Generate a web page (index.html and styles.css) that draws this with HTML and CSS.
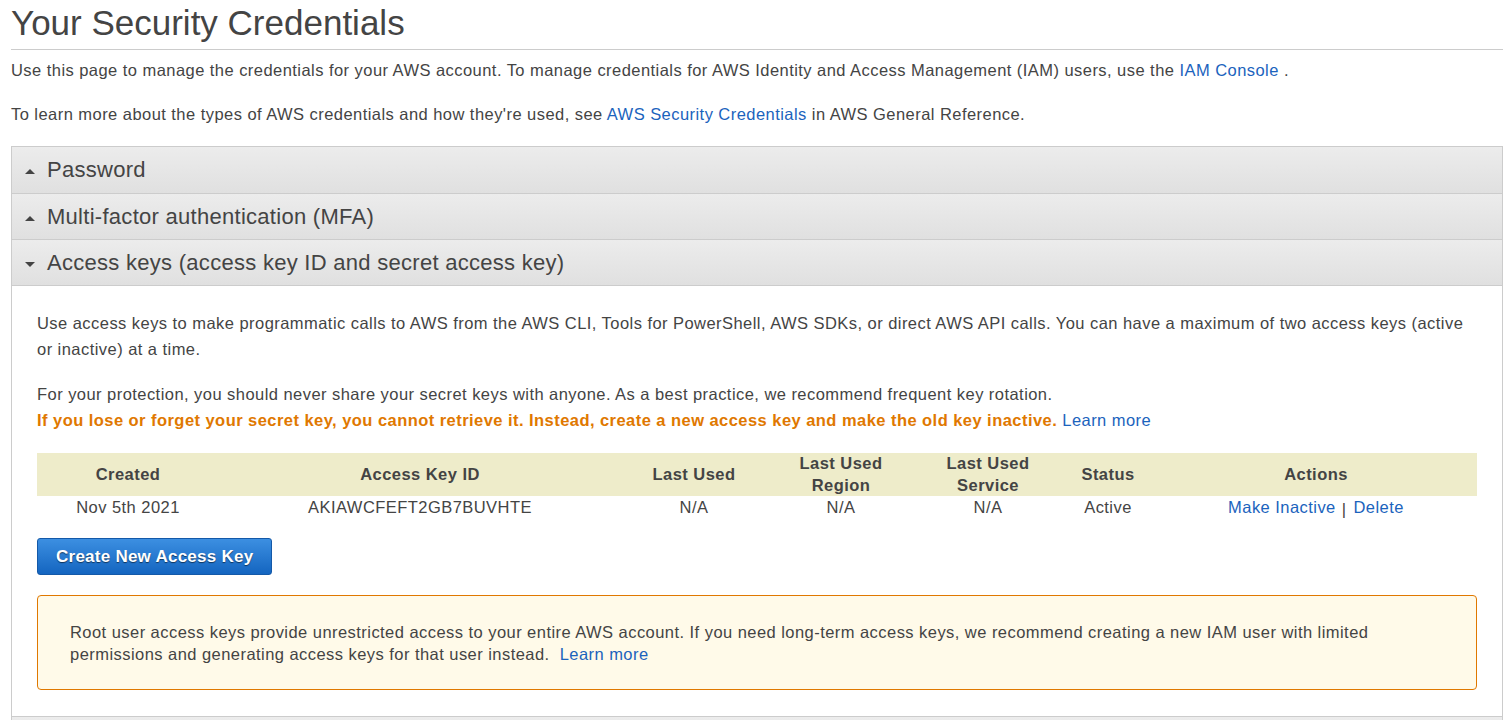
FILE: index.html
```html
<!DOCTYPE html>
<html lang="en">
<head>
<meta charset="utf-8">
<title>Your Security Credentials</title>
<link rel="stylesheet" href="styles.css">
</head>
<body>
<div class="page">
  <h1 class="title">Your Security Credentials</h1>
  <p class="intro">Use this page to manage the credentials for your AWS account. To manage credentials for AWS Identity and Access Management (IAM) users, use the <a class="link" href="#">IAM Console</a> .</p>
  <p class="intro intro-second">To learn more about the types of AWS credentials and how they're used, see <a class="link" href="#">AWS Security Credentials</a> in AWS General Reference.</p>

  <div class="accordion">
    <div class="acc-header acc-first"><span class="caret caret-up"></span><span class="acc-title">Password</span></div>
    <div class="acc-header"><span class="caret caret-up"></span><span class="acc-title">Multi-factor authentication (MFA)</span></div>
    <div class="acc-header"><span class="caret caret-down"></span><span class="acc-title">Access keys (access key ID and secret access key)</span></div>
    <div class="acc-body">
      <p class="body-text">Use access keys to make programmatic calls to AWS from the AWS CLI, Tools for PowerShell, AWS SDKs, or direct AWS API calls. You can have a maximum of two access keys (active<br>or inactive) at a time.</p>
      <p class="body-text body-second">For your protection, you should never share your secret keys with anyone. As a best practice, we recommend frequent key rotation.<br><strong class="warn-text">If you lose or forget your secret key, you cannot retrieve it. Instead, create a new access key and make the old key inactive.</strong> <a class="link" href="#">Learn more</a></p>

      <table class="keys">
        <colgroup>
          <col class="c-created"><col class="c-id"><col class="c-used"><col class="c-region"><col class="c-service"><col class="c-status"><col class="c-actions">
        </colgroup>
        <thead>
          <tr>
            <th>Created</th>
            <th>Access Key ID</th>
            <th>Last Used</th>
            <th>Last Used<br>Region</th>
            <th>Last Used<br>Service</th>
            <th>Status</th>
            <th>Actions</th>
          </tr>
        </thead>
        <tbody>
          <tr>
            <td>Nov 5th 2021</td>
            <td>AKIAWCFEFT2GB7BUVHTE</td>
            <td>N/A</td>
            <td>N/A</td>
            <td>N/A</td>
            <td>Active</td>
            <td><a class="link" href="#">Make Inactive</a><span class="sep">|</span><a class="link" href="#">Delete</a></td>
          </tr>
        </tbody>
      </table>

      <button class="btn-primary" type="button">Create New Access Key</button>

      <div class="notice">Root user access keys provide unrestricted access to your entire AWS account. If you need long-term access keys, we recommend creating a new IAM user with limited<br>permissions and generating access keys for that user instead.&nbsp; <a class="link" href="#">Learn more</a></div>
    </div>
    <div class="acc-header"><span class="caret caret-up"></span><span class="acc-title">CloudFront key pairs</span></div>
    <div class="acc-header"><span class="caret caret-up"></span><span class="acc-title">X.509 certificate</span></div>
    <div class="acc-header"><span class="caret caret-up"></span><span class="acc-title">Account identifiers</span></div>
  </div>
</div>
</body>
</html>
```

FILE: styles.css
```css
html, body {
  margin: 0;
  padding: 0;
  background: #ffffff;
}

body {
  font-family: "Liberation Sans", Arial, sans-serif;
  color: #444444;
  font-size: 16.5px;
  letter-spacing: 0.45px;
}

.page {
  padding: 0 7px 0 11px;
}

.title {
  margin: 0;
  padding: 3px 0 6px 0;
  font-size: 35px;
  font-weight: normal;
  letter-spacing: 0;
  line-height: 40px;
  color: #444444;
  border-bottom: 1px solid #cccccc;
}

.intro {
  margin: 9px 0 0 0;
  line-height: 22px;
}

.intro-second {
  margin-top: 22px;
}

.link {
  color: #1b63bd;
  text-decoration: none;
}

.accordion {
  margin-top: 21px;
  border: 1px solid #cccccc;
  border-bottom: none;
}

.acc-header {
  display: flex;
  align-items: center;
  height: 45px;
  padding-left: 13px;
  border-top: 1px solid #cccccc;
  background: linear-gradient(#ececec, #e0e0e0);
  font-size: 22px;
  letter-spacing: 0.28px;
  color: #444444;
}

.acc-first {
  border-top: none;
  height: 46px;
}

.acc-title {
  margin-left: 12px;
}

.caret {
  display: inline-block;
  flex: none;
  width: 0;
  height: 0;
  border-left: 5px solid transparent;
  border-right: 5px solid transparent;
  margin-top: 3px;
}

.caret-up {
  border-bottom: 5px solid #444444;
}

.caret-down {
  border-top: 5px solid #444444;
}

.acc-body {
  border-top: 1px solid #cccccc;
  padding: 25px 0 26px 25px;
  background: #ffffff;
}

.body-text {
  margin: 0;
  line-height: 25.5px;
}

.body-second {
  margin-top: 20px;
}

.warn-text {
  color: #e07800;
  font-weight: bold;
}

.keys {
  margin-top: 20px;
  width: 1440px;
  table-layout: fixed;
  border-collapse: collapse;
  font-size: 16.5px;
  letter-spacing: 0.45px;
}

.c-created { width: 182px; }
.c-id { width: 402px; }
.c-used { width: 146px; }
.c-region { width: 148px; }
.c-service { width: 146px; }
.c-status { width: 94px; }
.c-actions { width: 322px; }

.keys th {
  background: #eeecca;
  font-weight: bold;
  color: #444444;
  height: 43px;
  line-height: 21.5px;
  padding: 0;
  text-align: center;
  vertical-align: middle;
}

.keys td {
  padding: 0;
  line-height: 22px;
  text-align: center;
  color: #444444;
}

.sep {
  display: inline-block;
  margin: 0 7px 0 6px;
  color: #444444;
  position: relative;
  top: 2px;
}

.btn-primary {
  display: block;
  margin-top: 20px;
  height: 37px;
  padding: 0 18px;
  border: 1px solid #1459a8;
  border-radius: 3px;
  background: linear-gradient(#3c8fe1, #1465c0);
  color: #ffffff;
  font-family: "Liberation Sans", Arial, sans-serif;
  font-size: 17px;
  font-weight: bold;
  letter-spacing: 0.25px;
  line-height: 35px;
  text-shadow: 0 1px 1px rgba(0, 0, 0, 0.55);
  cursor: pointer;
}

.notice {
  margin: 20px 25px 0 0;
  padding: 25px 32px 24px 32px;
  background: #fffae9;
  border: 1px solid #e07800;
  border-radius: 4px;
  line-height: 22px;
  color: #444444;
}
```
